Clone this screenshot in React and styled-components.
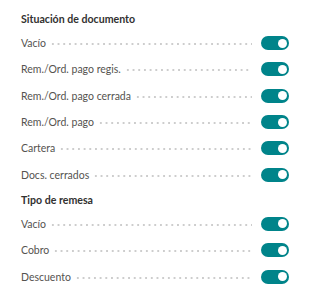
import React from "react";
import styled, { createGlobalStyle } from "styled-components";

const Global = createGlobalStyle`
  html, body { margin: 0; padding: 0; background: #ffffff; }
  body { font-family: Lato, "Open Sans", sans-serif; }
`;

const Page = styled.div`
  width: 329px;
  padding: 8px 40px 0 21px;
  box-sizing: border-box;
`;

const Section = styled.section`
  display: flex;
  flex-direction: column;
  & + & { margin-top: 1px; }
`;

const Header = styled.div`
  height: 22px;
  line-height: 22px;
  font-size: 10.6px;
  font-weight: 700;
  color: #323130;
`;

const Row = styled.div`
  height: 26.3px;
  display: flex;
  align-items: center;
`;

const Label = styled.span`
  font-size: 10.5px;
  color: #55534f;
  white-space: nowrap;
`;

const Leader = styled.span`
  flex: 1;
  align-self: center;
  height: 2px;
  margin: 2px 9px 0 4px;
  background-image: radial-gradient(circle, #cdcdcd 0.7px, transparent 1px);
  background-size: 5.7px 2px;
  background-repeat: repeat-x;
`;

const Toggle = styled.span`
  position: relative;
  width: 28px;
  height: 14px;
  border-radius: 7px;
  background: ${(p) => (p.$on ? "#00848a" : "#ffffff")};
  flex: none;
  &::after {
    content: "";
    position: absolute;
    top: 2.5px;
    right: ${(p) => (p.$on ? "2.3px" : "auto")};
    width: 9px;
    height: 9px;
    border-radius: 50%;
    background: #ffffff;
  }
`;

const sections = [
  {
    title: "Situación de documento",
    items: [
      "Vacío",
      "Rem./Ord. pago regis.",
      "Rem./Ord. pago cerrada",
      "Rem./Ord. pago",
      "Cartera",
      "Docs. cerrados",
    ],
  },
  { title: "Tipo de remesa", items: ["Vacío", "Cobro", "Descuento"] },
];

export default function App() {
  return (
    <>
      <Global />
      <Page>
        {sections.map((s) => (
          <Section key={s.title}>
            <Header>{s.title}</Header>
            {s.items.map((it) => (
              <Row key={it}>
                <Label>{it}</Label>
                <Leader />
                <Toggle $on />
              </Row>
            ))}
          </Section>
        ))}
      </Page>
    </>
  );
}
